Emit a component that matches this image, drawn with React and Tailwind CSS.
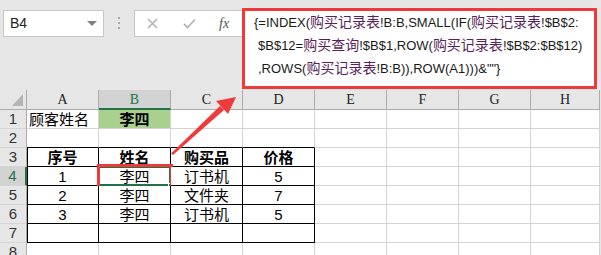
import React from 'react';

const COLS = ['A', 'B', 'C', 'D', 'E', 'F', 'G', 'H'];
const SHEET = '购买记录表';

// row number -> cell values for A..D
const rows = {
    1: ['顾客姓名', '李四', '', ''],
    3: ['序号', '姓名', '购买品', '价格'],
    4: ['1', '李四', '订书机', '5'],
    5: ['2', '李四', '文件夹', '7'],
    6: ['3', '李四', '订书机', '5'],
};

const inTable = (c, r) => c >= 0 && c <= 3 && r >= 3 && r <= 7;

function Cn({ children }) {
    return <span className="text-[#5b1f5b] text-[14px]">{children}</span>;
}

function Cell({ c, r }) {
    const v = rows[r] ? rows[r][c] : '';
    const right = inTable(c, r) ? 'border-r-black' : 'border-r-[#d4d4d4]';
    const bottom = inTable(c, r) || inTable(c, r + 1) ? 'border-b-black' : 'border-b-[#d4d4d4]';
    const left = c === 0 && inTable(c, r) ? 'shadow-[inset_1px_0_0_#000]' : '';
    const green = r === 1 && c === 1 ? 'bg-[#a9d08e]' : 'bg-white';
    const bold = r === 3 || (r === 1 && c === 1) ? 'font-bold' : '';
    const align = r === 1 && c === 0 ? 'justify-start pl-[2px]' : 'justify-center';
    const sel = r === 4 && c === 1;
    return (
        <div className={`relative h-[19px] border-r border-b flex items-center text-[15px] leading-none text-black ${right} ${bottom} ${left} ${green} ${bold} ${align}`}>
            {v}
            {sel && (
                <>
                    <div className="absolute -left-[1px] -top-[1px] w-[73px] h-[20px] border-2 border-[#217346]" />
                    <div className="absolute -right-[3px] -bottom-[3px] w-[5px] h-[5px] bg-[#217346] border border-white" />
                    <div className="absolute -left-[2px] -top-[3px] w-[76px] h-[25px] border-[3px] border-[#ee3a3a]" />
                </>
            )}
        </div>
    );
}

export default function App() {
    return (
        <div
            className="relative w-[601px] h-[255px] overflow-hidden bg-[#e6e6e6]"
            style={{ fontFamily: "'Liberation Sans', 'Noto Sans CJK SC', sans-serif" }}
        >
            {/* barra de fórmulas */}
            <div className="flex items-start h-[90px]">
                <div className="ml-[3px] mt-[10px] w-[101px] h-[27px] bg-white border border-[#c6c6c6] flex items-center pl-[6px] pr-[6px] text-[14px] text-[#222]">
                    <span className="flex-1">B4</span>
                    <span className="w-0 h-0 border-l-[5px] border-r-[5px] border-t-[5px] border-l-transparent border-r-transparent border-t-[#808080]" />
                </div>
                <div className="ml-[14px] mt-[17px] flex flex-col gap-[3px]">
                    <span className="w-[2px] h-[2px] bg-[#a8a8a8]" />
                    <span className="w-[2px] h-[2px] bg-[#a8a8a8]" />
                    <span className="w-[2px] h-[2px] bg-[#a8a8a8]" />
                </div>
                <div className="ml-[14px] mt-[10px] w-[108px] h-[27px] bg-white border border-r-0 border-[#c6c6c6] flex items-center text-[#b4b4b4]">
                    <svg className="ml-[12px]" width="11" height="11" viewBox="0 0 11 11">
                        <path d="M1 1L10 10M10 1L1 10" stroke="#b4b4b4" strokeWidth="1.6" />
                    </svg>
                    <svg className="ml-[25px]" width="13" height="11" viewBox="0 0 13 11">
                        <path d="M1 6L4.5 9.5L12 1.5" stroke="#b4b4b4" strokeWidth="1.8" fill="none" />
                    </svg>
                    <span className="ml-[23px] italic text-[14px] text-[#555]" style={{ fontFamily: "'Liberation Serif', serif" }}>fx</span>
                </div>
                <div className="mt-[8px] w-[355px] h-[81px] bg-white border-[3px] border-[#ee3a3a] pl-[9px] text-[13px] leading-[23px] text-[#1a1a1a]">
                    <div className="whitespace-nowrap">{'{=INDEX('}<Cn>{SHEET}</Cn>{'!B:B,SMALL(IF('}<Cn>{SHEET}</Cn>{'!$B$2:'}</div>
                    <div className="whitespace-nowrap pl-[4px]">{'$B$12='}<Cn>购买查询</Cn>{'!$B$1,ROW('}<Cn>{SHEET}</Cn>{'!$B$2:$B$12)'}</div>
                    <div className="whitespace-nowrap pl-[4px]">{',ROWS('}<Cn>{SHEET}</Cn>{'!B:B)),ROW(A1)))&""}'}</div>
                </div>
            </div>

            {/* hoja */}
            <div className="grid grid-cols-[27px_72px_72px_72px_72px_72px_72px_72px_69px]">
                <div className="h-[20px] border-r border-b border-[#ababab] bg-[#e6e6e6] flex items-end justify-end pr-[3px] pb-[3px]">
                    <svg width="11" height="12" viewBox="0 0 11 12">
                        <polygon points="11,0 11,12 0,12" fill="#b4b4b4" />
                    </svg>
                </div>
                {COLS.map((col, i) => (
                    <div
                        key={col}
                        className={`h-[20px] flex items-center justify-center border-r border-r-[#ababab] text-[14px] ${
                            i === 1 ? 'bg-[#d2d2d2] text-[#217346] border-b-2 border-b-[#217346]' : 'bg-[#e6e6e6] text-[#222] border-b border-b-[#ababab]'
                        }`}
                        style={{ fontFamily: "'Liberation Serif', serif" }}
                    >
                        {col}
                    </div>
                ))}
                {[1, 2, 3, 4, 5, 6, 7, 8].map(r => (
                    <React.Fragment key={r}>
                        <div
                            className={`h-[19px] flex items-center justify-center border-b border-b-[#d4d4d4] text-[15px] ${
                                r === 4 ? 'bg-[#d2d2d2] text-[#217346] border-r-2 border-r-[#217346]' : 'bg-[#e6e6e6] text-[#333] border-r border-r-[#ababab]'
                            }`}
                        >
                            {r}
                        </div>
                        {COLS.map((col, c) => <Cell key={col} c={c} r={r} />)}
                    </React.Fragment>
                ))}
            </div>

            {/* flecha roja */}
            <svg className="absolute left-0 top-0 pointer-events-none" width="601" height="255">
                <polygon points="171,153.5 173,155 224,110 220,106" fill="#ee3a3a" />
                <polygon points="236,97 228,114 216,101" fill="#ee3a3a" />
            </svg>
        </div>
    );
}
